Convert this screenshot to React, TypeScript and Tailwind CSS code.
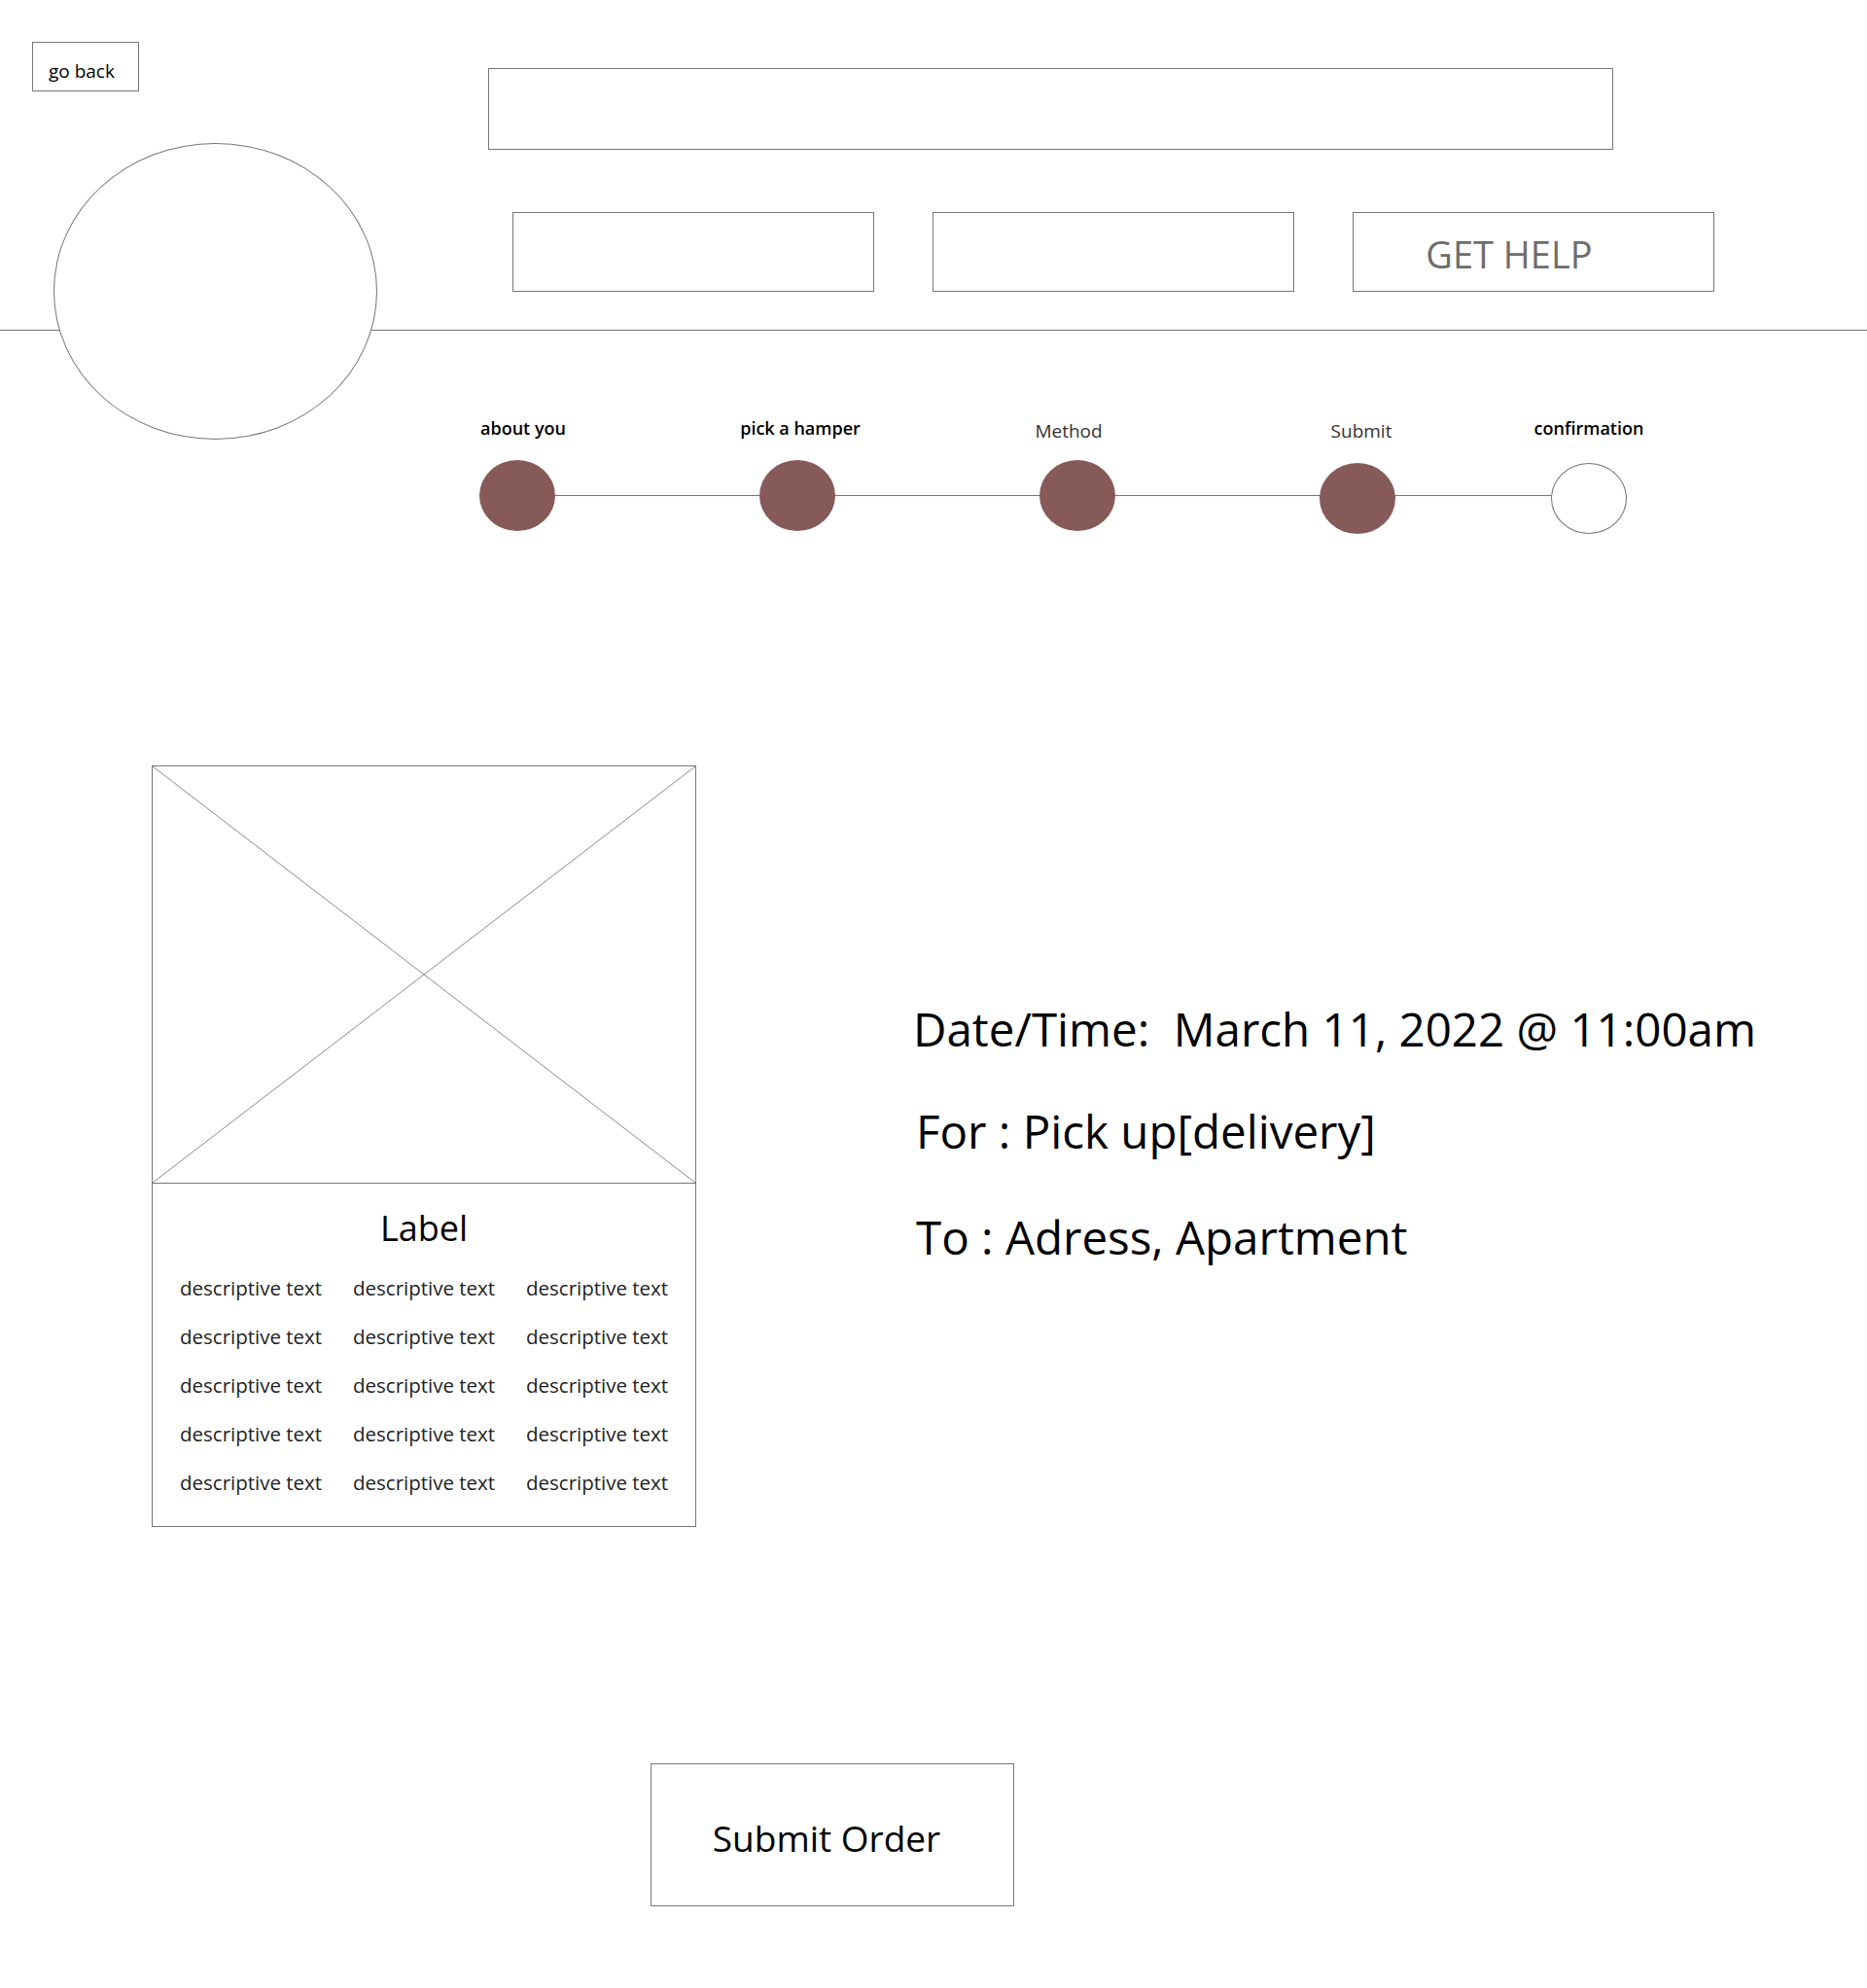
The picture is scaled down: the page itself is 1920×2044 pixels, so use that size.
const steps = [
  { label: "about you", done: true, strong: true, shift: "translate-x-[6px]", drop: "" },
  { label: "pick a hamper", done: true, strong: true, shift: "translate-x-[3px]", drop: "" },
  { label: "Method", done: true, strong: false, shift: "-translate-x-[9px] translate-y-[3px]", drop: "" },
  { label: "Submit", done: true, strong: false, shift: "translate-x-[4px] translate-y-[3px]", drop: "translate-y-[3px]" },
  { label: "confirmation", done: false, strong: true, shift: "", drop: "translate-y-[3px]" },
];

const connectors = ["w-[210px]", "w-[210px]", "w-[210px]", "w-[160px]"];

const rows = [0, 1, 2, 3, 4];

function Step({
  label,
  done,
  strong,
  shift,
  drop,
}: {
  label: string;
  done: boolean;
  strong: boolean;
  shift: string;
  drop: string;
}) {
  return (
    <div className="flex w-[78px] flex-col items-center">
      <span
        className={
          strong
            ? `whitespace-nowrap text-[18px] leading-[24px] font-semibold text-black ${shift}`
            : `whitespace-nowrap text-[19px] leading-[24px] text-[#333] ${shift}`
        }
      >
        {label}
      </span>
      <div
        className={
          done
            ? `mt-[21px] h-[73px] w-[78px] rounded-[50%] bg-[#875a5a] ${drop}`
            : `mt-[21px] h-[73px] w-[78px] rounded-[50%] border border-[#767676] bg-white ${drop}`
        }
      />
    </div>
  );
}

export default function App() {
  return (
    <div className="relative h-[2044px] w-[1920px] overflow-hidden bg-white font-['Open_Sans',sans-serif] text-black">
      {/* HEADER */}
      <header className="relative h-[340px] border-b border-[#767676]">
        <div className="flex">
          <div className="w-[502px] pl-[33px] pt-[43px]">
            <button className="flex h-[51px] w-[110px] items-center border border-[#767676] pl-[16px] pt-[9px] text-[19px] text-black">
              go back
            </button>
          </div>

          <div className="pt-[70px]">
            <div className="h-[84px] w-[1157px] border border-[#767676]" />

            <div className="ml-[25px] mt-[64px] flex gap-[60px]">
              <div className="h-[82px] w-[372px] border border-[#767676]" />
              <div className="h-[82px] w-[372px] border border-[#767676]" />
              <button className="flex h-[82px] w-[372px] items-center justify-center border border-[#767676] pr-[50px] pt-[4px] text-[38px] text-[#6d6d6d]">
                GET HELP
              </button>
            </div>
          </div>
        </div>

        {/* AVATAR */}
        <div className="absolute left-[55px] top-[147px] z-10 h-[305px] w-[333px] rounded-[50%] border border-[#767676] bg-white" />
      </header>

      {/* PROGRESS */}
      <div className="flex items-start pl-[493px] pt-[88px]">
        {steps.map((step, i) => (
          <div key={step.label} className="flex items-start">
            <Step {...step} />
            {i < connectors.length && (
              <div className={`mt-[81px] h-px bg-[#767676] ${connectors[i]}`} />
            )}
          </div>
        ))}
      </div>

      {/* ORDER SUMMARY */}
      <div className="mt-[241px] flex pl-[156px]">
        <div className="w-[560px] border border-[#767676]">
          <div className="h-[429px] border-b border-[#767676]">
            <svg className="h-full w-full" viewBox="0 0 100 100" preserveAspectRatio="none">
              <line x1="0" y1="0" x2="100" y2="100" stroke="#8a8a8a" strokeWidth="1" vectorEffect="non-scaling-stroke" />
              <line x1="100" y1="0" x2="0" y2="100" stroke="#8a8a8a" strokeWidth="1" vectorEffect="non-scaling-stroke" />
            </svg>
          </div>

          <div className="pb-[20px] pt-[22px]">
            <p className="text-center text-[36px] leading-[48px]">Label</p>

            <div className="mt-[12px] grid grid-cols-[148px_148px_148px] gap-x-[30px] pl-[28px]">
              {rows.map((r) =>
                [0, 1, 2].map((c) => (
                  <span
                    key={`${r}-${c}`}
                    className="whitespace-nowrap text-[20.5px] leading-[50px] text-[#222]"
                  >
                    descriptive text
                  </span>
                ))
              )}
            </div>
          </div>
        </div>

        <div className="ml-[223px] mt-[239px] flex flex-col text-[47.5px] leading-[64px]">
          <p className="whitespace-pre">Date/Time:  March 11, 2022 @ 11:00am</p>
          <p className="ml-[3px] mt-[41px]">For : Pick up[delivery]</p>
          <p className="ml-[3px] mt-[45px]">To : Adress, Apartment</p>
        </div>
      </div>

      {/* SUBMIT */}
      <div className="mt-[243px] pl-[669px]">
        <button className="flex h-[147px] w-[374px] items-center justify-center border border-[#767676] pr-[12px] pt-[7px] text-[37px]">
          Submit Order
        </button>
      </div>
    </div>
  );
}
